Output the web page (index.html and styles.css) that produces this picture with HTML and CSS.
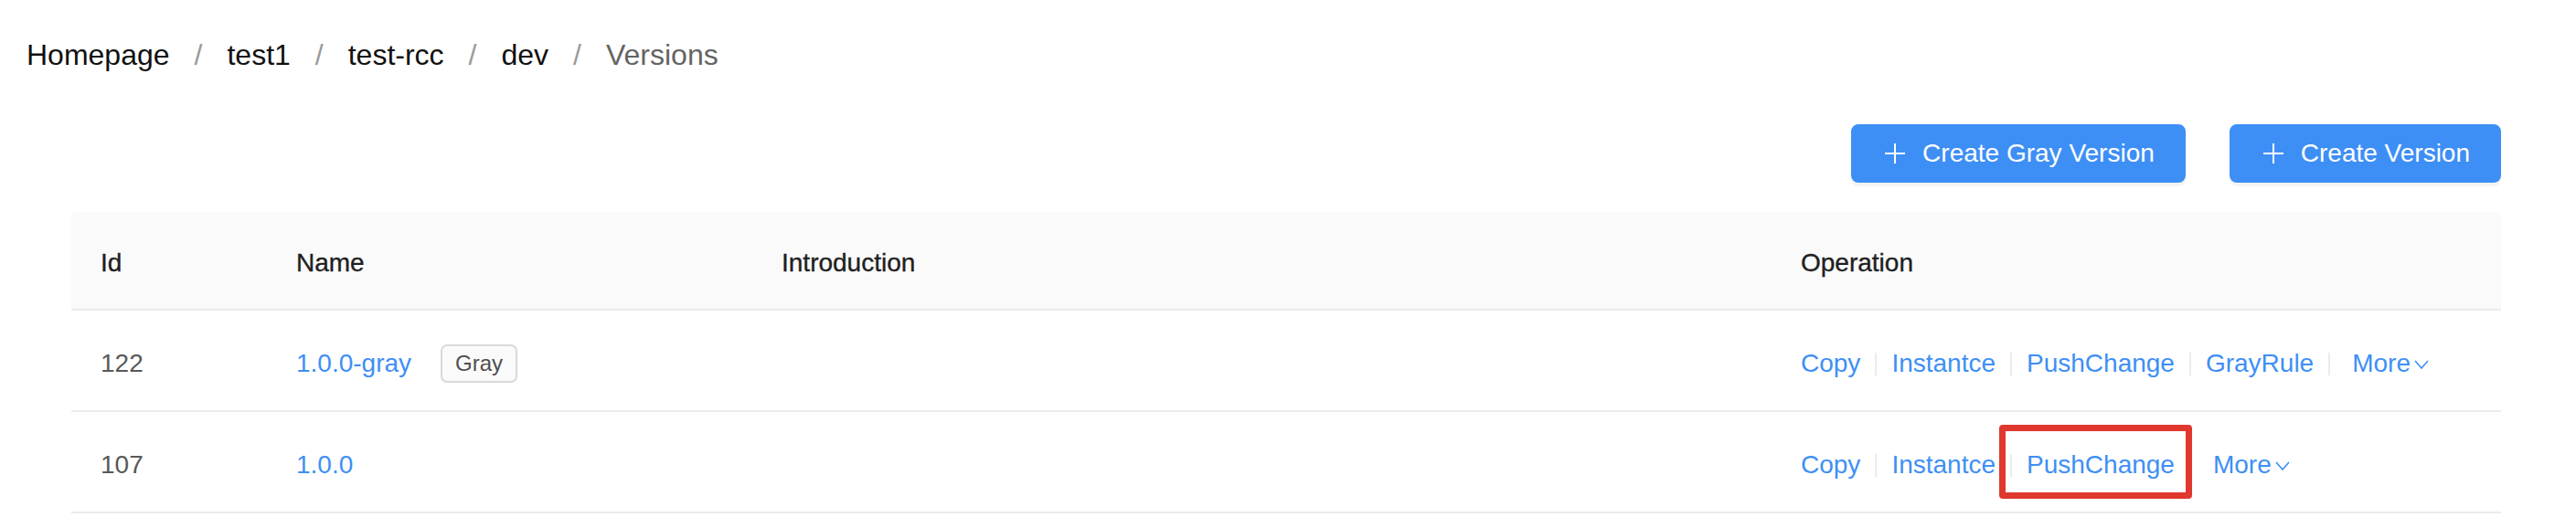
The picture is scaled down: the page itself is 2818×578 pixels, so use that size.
FILE: index.html
```html
<!DOCTYPE html>
<html lang="en">
<head>
<meta charset="utf-8">
<title>Versions</title>
<link rel="stylesheet" href="styles.css">
</head>
<body>
<div class="page">
  <nav class="crumbs">
    <span class="crumb">Homepage</span><span class="sep">/</span>
    <span class="crumb">test1</span><span class="sep">/</span>
    <span class="crumb">test-rcc</span><span class="sep">/</span>
    <span class="crumb">dev</span><span class="sep">/</span>
    <span class="crumb current">Versions</span>
  </nav>
  <div class="content">
    <div class="toolbar">
      <button class="btn" type="button">
        <svg class="plus" width="28" height="28" viewBox="0 0 28 28"><path d="M14 3v22M3 14h22" stroke="#fff" stroke-width="2" fill="none"/></svg>
        <span>Create Gray Version</span>
      </button>
      <button class="btn" type="button">
        <svg class="plus" width="28" height="28" viewBox="0 0 28 28"><path d="M14 3v22M3 14h22" stroke="#fff" stroke-width="2" fill="none"/></svg>
        <span>Create Version</span>
      </button>
    </div>
    <table class="tbl">
      <colgroup>
        <col class="c-id"><col class="c-name"><col class="c-intro"><col class="c-op">
      </colgroup>
      <thead>
        <tr><th>Id</th><th>Name</th><th>Introduction</th><th>Operation</th></tr>
      </thead>
      <tbody>
        <tr>
          <td class="num">122</td>
          <td><div class="name"><a class="link">1.0.0-gray</a><span class="tag">Gray</span></div></td>
          <td></td>
          <td>
            <div class="ops">
              <a class="link">Copy</a><span class="div"></span>
              <a class="link">Instantce</a><span class="div"></span>
              <a class="link">PushChange</a><span class="div"></span>
              <a class="link">GrayRule</a><span class="div"></span>
              <a class="link more">More<svg class="chev" width="16" height="10" viewBox="0 0 16 10"><path d="M1 1l7 8 7-8" stroke="currentColor" stroke-width="1.6" fill="none"/></svg></a>
            </div>
          </td>
        </tr>
        <tr>
          <td class="num">107</td>
          <td><div class="name"><a class="link">1.0.0</a></div></td>
          <td></td>
          <td>
            <div class="ops">
              <a class="link">Copy</a><span class="div"></span>
              <a class="link">Instantce</a><span class="div"></span>
              <a class="link marked">PushChange</a><span class="div"></span>
              <a class="link more">More<svg class="chev" width="16" height="10" viewBox="0 0 16 10"><path d="M1 1l7 8 7-8" stroke="currentColor" stroke-width="1.6" fill="none"/></svg></a>
            </div>
          </td>
        </tr>
      </tbody>
    </table>
  </div>
</div>
</body>
</html>
```
FILE: styles.css
```css
html, body {
  margin: 0;
  padding: 0;
  background: #fff;
}

body {
  font-family: "Liberation Sans", Arial, sans-serif;
  color: #262626;
}

.page {
  padding-top: 38px;
}

.crumbs {
  display: flex;
  align-items: center;
  padding-left: 29px;
  font-size: 32px;
  line-height: 44px;
  height: 44px;
}

.crumb {
  color: #111;
}

.crumb.current {
  color: #646464;
}

.sep {
  color: #9a9a9a;
  margin: 0 27px;
}

.content {
  margin: 0 82px 0 78px;
}

.toolbar {
  display: flex;
  justify-content: flex-end;
  gap: 48px;
  margin-top: 54px;
  margin-bottom: 32px;
}

.btn {
  display: inline-flex;
  align-items: center;
  gap: 16px;
  height: 64px;
  padding: 0 32px;
  border: 2px solid #3e8ff5;
  border-radius: 8px;
  background: #3e8ff5;
  color: #fff;
  font-family: "Liberation Sans", Arial, sans-serif;
  font-size: 28px;
  box-shadow: 0 4px 0 rgba(0, 0, 0, 0.045);
  cursor: pointer;
}

.plus {
  display: block;
  flex: none;
}

.tbl {
  width: 100%;
  table-layout: fixed;
  border-collapse: separate;
  border-spacing: 0;
  font-size: 28px;
}

.c-id { width: 214px; }
.c-name { width: 531px; }
.c-intro { width: 1115px; }
.c-op { width: 798px; }

.tbl th {
  padding: 34px 32px 28px;
  background: #fafafa;
  border-bottom: 2px solid #ebebeb;
  text-align: left;
  font-weight: 500;
  color: #1f1f1f;
  line-height: 44px;
  vertical-align: middle;
  -webkit-text-stroke: 0.35px #1f1f1f;
}

.tbl th:first-child { border-top-left-radius: 6px; }
.tbl th:last-child { border-top-right-radius: 6px; }

.tbl td {
  padding: 36px 32px 29px;
  border-bottom: 2px solid #ebebeb;
  line-height: 44px;
  height: 44px;
  vertical-align: middle;
  color: #595959;
}

.link {
  color: #3e8ff5;
  text-decoration: none;
  cursor: pointer;
}

.name {
  display: flex;
  align-items: center;
}

.tag {
  display: inline-block;
  margin-left: 32px;
  height: 38px;
  line-height: 38px;
  padding: 0 14px;
  border: 2px solid #d9d9d9;
  border-radius: 7px;
  background: #fafafa;
  color: #4f4f4f;
  font-size: 24px;
}

.ops {
  display: flex;
  align-items: center;
}

.div {
  display: inline-block;
  width: 2px;
  height: 25px;
  margin: 0 16px;
  background: #ebebeb;
}

.more {
  display: inline-flex;
  align-items: center;
  padding-left: 8px;
}

.chev {
  display: block;
  margin-left: 4px;
  margin-top: 2px;
}

.marked {
  position: relative;
}

.marked::after {
  content: "";
  position: absolute;
  top: -22px;
  bottom: -15px;
  left: -30px;
  right: -19px;
  border: 7px solid #e0382e;
  border-radius: 4px;
  pointer-events: none;
}
```
